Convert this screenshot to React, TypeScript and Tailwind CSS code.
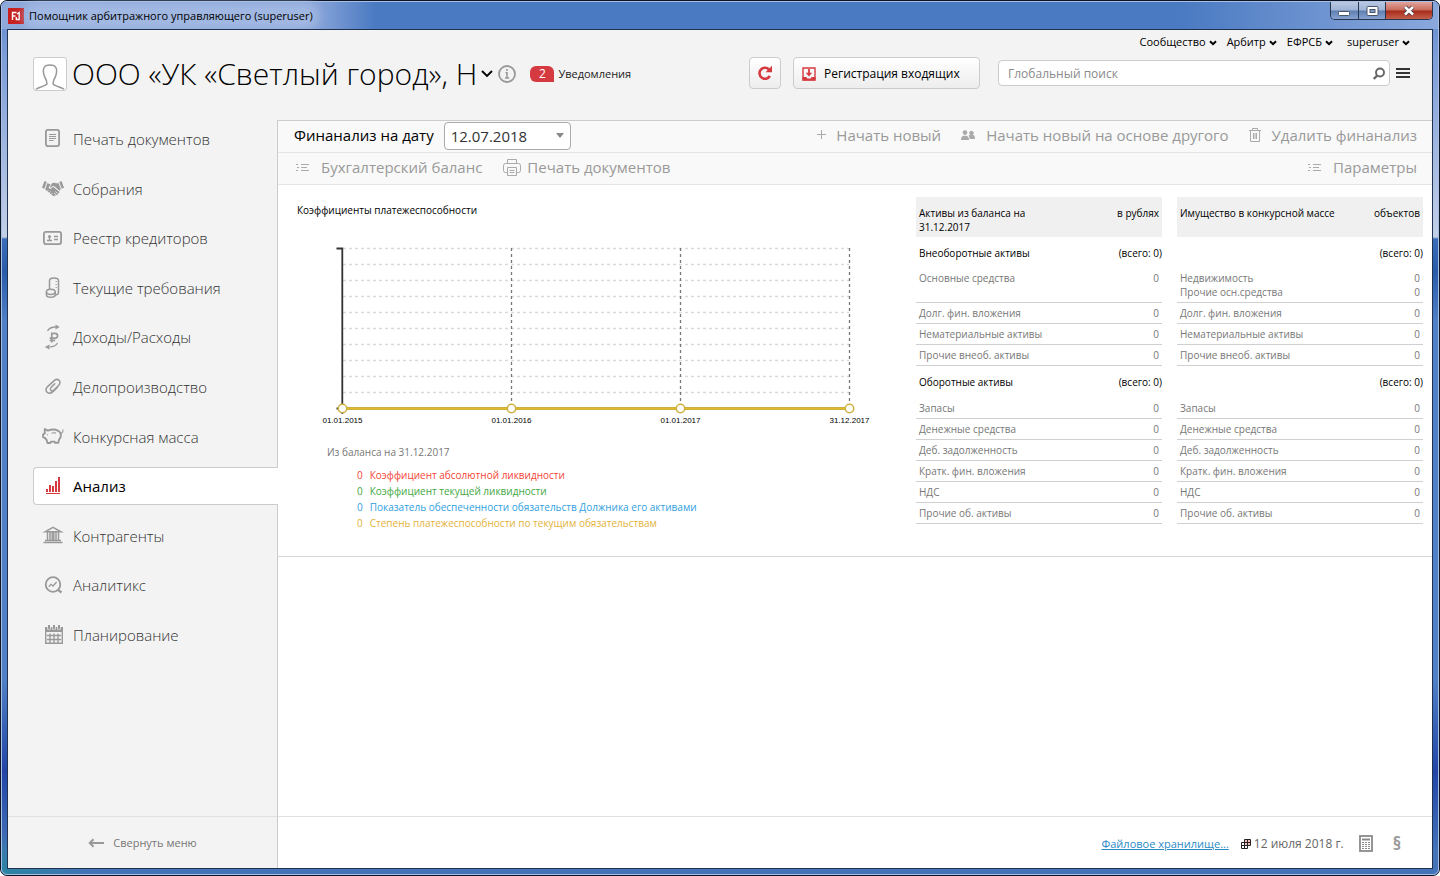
import React from "react";

type IconProps = { className?: string };

const FONT = "font-['Open_Sans','Noto_Sans',sans-serif]";

const DocIcon = () => (
  <svg width="22" height="22" viewBox="0 0 22 22" fill="none" stroke="#999" strokeWidth="1.8">
    <rect x="3.9" y="1.9" width="13.2" height="16.2" rx="2" />
    <path d="M7 6.500h7M7 8.500h7M7 10.500h7M7 12.500h4.500" strokeWidth="1" />
  </svg>
);

const HandshakeIcon = () => (
  <svg width="22" height="22" viewBox="0 0 22 22" fill="#999">
    <path d="M2.500 3L4.700 4 2.300 10.800 0 9.800zM19.500 3L17.300 4l2.400 6.800 2.300-1z" />
    <path d="M5.300 5.200L8.600 6.200 6.800 9.600c.4 1.500 2.400 1.100 3.400-.6l.8-.4 6.200 4.900c.8.9-.2 2-1.200 1.500l.1.400c.3 1-.8 1.600-1.500 1-.1 1-1.100 1.500-1.800 1-.6 1-1.800.7-2.400.2L3.200 11.500z" />
    <path d="M8 9l1.700-3.200c.8-1.300 3-1.200 4.100-.6l2.800.1 2.200 5.800-1.300 1.700-5.700-4.700-1.700.5C9.500 9.900 8.300 10.200 8 9z" />
    <path d="M7 9.500c.8 1.600 2.600 1 3.500-.8l.9-.3 6 4.800M4.500 14l2-2M6.500 15.500l2-2M8.500 17l2-2M12 15l2 1.800M13.300 13.500l2.200 1.800" stroke="#f3f3f3" strokeWidth=".8" fill="none" />
  </svg>
);

const CardIcon = () => (
  <svg width="22" height="22" viewBox="0 0 22 22" fill="none" stroke="#999" strokeWidth="1.800">
    <rect x="1.900" y="4.900" width="17.200" height="12.200" rx="2" />
    <circle cx="7.500" cy="9.400" r="1.500" fill="#999" stroke="none" />
    <path d="M7.500 10v3M5 13.500h5M12 9.500h4M12 12.500h4" strokeWidth="1.300" />
  </svg>
);

const CoinsIcon = () => (
  <svg width="22" height="24" viewBox="0 0 22 24" fill="none" stroke="#999" strokeWidth="1.500">
    <path d="M7.500 13V4.500C7.500 1 16.500 1 16.500 4.500V16c0 2-1.500 3-3.500 3" />
    <ellipse cx="8.800" cy="15.800" rx="4.400" ry="2.600" />
    <path d="M4.400 15.800v3c0 3.400 8.800 3.400 8.800 0v-3" />
    <path d="M13.500 5.500H15M13.500 8.500H15M13.500 11.500H15" strokeWidth=".8" />
  </svg>
);

const RubleIcon = () => (
  <svg width="22" height="26" viewBox="0 0 22 26" fill="none" stroke="#999" strokeWidth="1.300">
    <path d="M5.500 7C7 4 10 2.800 14.500 3" />
    <path d="M13.500.5l4.200 2.500-4.200 2.400z" fill="#999" stroke="none" />
    <path d="M15.500 19c-1.500 3-4 3.800-7.500 3.900" />
    <path d="M7.500 20.500L2.800 22.900l4.700 2.500z" fill="#999" stroke="none" />
    <path d="M9.800 18.500V9.300h3.200c3.400 0 3.400 4.900 0 4.900H7.700M7.700 16.400h5.500" strokeWidth="1.700" />
  </svg>
);

const ClipIcon = () => (
  <svg width="22" height="22" viewBox="0 0 22 22" fill="none" stroke="#999" strokeWidth="1.500" strokeLinecap="round">
    <path d="M15.300 11.500l-4.300 4.100c-4.600 4-9.300-.6-5.400-5L12.200 4.600c3.800-3 7.600.7 4.600 4.600l-5.200 5.100c-2.300 1.700-4.300-.5-2.600-2.700l3.800-3.900" />
  </svg>
);

const PigIcon = () => (
  <svg width="22" height="22" viewBox="0 0 22 22" fill="none" stroke="#999" strokeWidth="1.900" strokeLinejoin="round">
    <path d="M2.800 3l3.200 1.700c3-1.300 7-1.500 10.300.1 3.400 2 3.300 6.200.7 8.800l-.7 3.200h-3.200l-.5-1.200H9l-.6 1.400H5.500l-.8-2.800-1.600-2-2-1V8.300l1.700-.8z" />
    <path d="M9.500 7.300c1.500-.6 3-.6 4.500-.2M5.500 8.300v1M18.500 7.500c2-.3 2.800-2 2.300-4" strokeWidth="1.100" />
  </svg>
);

const BarsIcon = () => (
  <svg width="22" height="22" viewBox="0 0 22 22" fill="#d63a41">
    <path d="M4 14h2v3H4zM7 10h2v7H7zM10 11h2v6h-2zM13 6h2v11h-2zM16 2h2v15h-2zM4 18h14v1H4z" />
  </svg>
);

const BankIcon = () => (
  <svg width="22" height="22" viewBox="0 0 22 22" fill="none" stroke="#999" strokeWidth="1.500">
    <path d="M3 6.800L11 2.300l8 4.500zM5.500 7v9M8 7v9M14 7v9M16.500 7v9M10.200 7v9M11.800 7v9" />
    <path d="M3 15.500h16M1.500 17.500h19" />
  </svg>
);

const AnalyticsIcon = () => (
  <svg width="22" height="22" viewBox="0 0 22 22" fill="none" stroke="#999" strokeWidth="1.800">
    <circle cx="11" cy="10.500" r="7.300" />
    <path d="M15.500 15.500l4 3" strokeWidth="2.200" />
    <path d="M6.800 12.800L9 10.300l2 1.700 3.600-4" strokeWidth="1.300" />
  </svg>
);

const CalendarIcon = () => (
  <svg width="22" height="22" viewBox="0 0 22 22" fill="none" stroke="#999">
    <path d="M3 3h18v5H3z" fill="#999" stroke="none" />
    <path d="M7 2v3.500M12 2v3.500M17 2v3.500" stroke="#f3f3f3" strokeWidth="3.400" />
    <path d="M7 1v4M12 1v4M17 1v4" strokeWidth="2" />
    <path d="M3.700 8v11.300h16.600V8M5 11.500h14M5 15.500h14M8 9.500v9.500M12 9.500v9.500M16 9.500v9.500" strokeWidth="1.400" />
  </svg>
);

const ListIcon = () => (
  <svg width="14" height="10" viewBox="0 0 14 10" stroke="#aaa" strokeWidth="1" fill="none">
    <path d="M5 2.500h8M5 5.500h6M5 8.500h8M0 2.500h2M1 5.500h2M0 8.500h2" />
  </svg>
);

const Chevron = ({ className }: IconProps) => (
  <svg className={className} width="8" height="6" viewBox="0 0 8 6" fill="none" stroke="currentColor" strokeWidth="2">
    <path d="M1 1.200l3 3 3-3" />
  </svg>
);

const menu: { label: string; icon: React.ReactNode; active?: boolean }[] = [
  { label: "Печать документов", icon: <DocIcon /> },
  { label: "Собрания", icon: <HandshakeIcon /> },
  { label: "Реестр кредиторов", icon: <CardIcon /> },
  { label: "Текущие требования", icon: <CoinsIcon /> },
  { label: "Доходы/Расходы", icon: <RubleIcon /> },
  { label: "Делопроизводство", icon: <ClipIcon /> },
  { label: "Конкурсная масса", icon: <PigIcon /> },
  { label: "Анализ", icon: <BarsIcon />, active: true },
  { label: "Контрагенты", icon: <BankIcon /> },
  { label: "Аналитикс", icon: <AnalyticsIcon /> },
  { label: "Планирование", icon: <CalendarIcon /> },
];

function TitleBar() {
  return (
    <div className="flex h-[27px] shrink-0 items-start justify-between">
      <div className="flex h-full items-center gap-[5px] pl-1.5">
        <svg width="16" height="16" viewBox="0 0 16 16">
          <rect width="16" height="16" fill="#c8201f" />
          <path d="M4.500 12V4.500h4M4.500 8h3M9 6l2.200-1.500V11.500H8.300V9" fill="none" stroke="#fff" strokeWidth="1.400" />
        </svg>
        <span className="rounded-full bg-[#a9bfe6]/70 text-[11px] leading-4 text-black shadow-[0_0_8px_6px_rgba(169,191,230,0.7)]">
          Помощник арбитражного управляющего (superuser)
        </span>
      </div>
      <div className="mr-[5px] flex h-[18px] overflow-hidden rounded-b-[5px] border border-t-0 border-[#27364f]">
        <button aria-label="Свернуть" className="flex w-7 items-center justify-center border-r border-[#27364f] bg-[linear-gradient(to_bottom,#b9c8e2_0,#9fb3d6_48%,#5f7fb2_52%,#86a3d0_100%)]">
          <svg width="13" height="16" viewBox="0 0 13 16"><rect x=".5" y="8.500" width="11" height="4" rx="1" fill="#fff" stroke="#4a5568" /></svg>
        </button>
        <button aria-label="Развернуть" className="flex w-[27px] items-center justify-center border-r border-[#27364f] bg-[linear-gradient(to_bottom,#b9c8e2_0,#9fb3d6_48%,#5f7fb2_52%,#86a3d0_100%)]">
          <svg width="13" height="16" viewBox="0 0 13 16">
            <rect x="1" y="3.500" width="11" height="9" rx="1" fill="#fff" stroke="#4a5568" />
            <rect x="4" y="6.500" width="5" height="3" fill="#7f9bc8" stroke="#4a5568" />
          </svg>
        </button>
        <button aria-label="Закрыть" className="flex w-[46px] items-center justify-center bg-[linear-gradient(to_bottom,#e0a59c_0,#c96a5c_48%,#a82a18_52%,#c4604c_100%)]">
          <svg width="14" height="16" viewBox="0 0 14 16">
            <path d="M3 4l8 7.500M11 4L3 11.500" stroke="#4a3a45" strokeWidth="4.400" />
            <path d="M3 4l8 7.500M11 4L3 11.500" stroke="#fff" strokeWidth="2.600" />
          </svg>
        </button>
      </div>
    </div>
  );
}

function TopLink({ children, className = "" }: { children: React.ReactNode; className?: string }) {
  return (
    <button className={`flex items-center gap-[3px] text-[11px] leading-4 text-black ${className}`}>
      {children}
      <Chevron className="mt-0.5" />
    </button>
  );
}

function Header() {
  return (
    <header className="flex h-[90px] shrink-0 items-start pl-[25px] pr-[22px]">
      <div className="mt-[26px] flex min-w-0 flex-1 items-center">
        <div className="flex h-[34px] w-[34px] shrink-0 items-end justify-center rounded-[3px] border border-[#ccc] bg-white">
          <svg width="32" height="32" viewBox="0 0 32 32" fill="none" stroke="#999" strokeWidth="1.500">
            <path d="M2 31.500c1-2 8.500-3 11-5.500 0-3-1-5-2.500-7.500C8 11 9.500 7 16 7s8 4 5.500 11.500C20 21 19 23 19 26c2.500 2.500 10 3.500 11 5.500" />
          </svg>
        </div>
        <h1 className="ml-[5px] whitespace-nowrap text-[30px] font-light leading-9 text-black">
          ООО «УК «Светлый город», Н
        </h1>
        <button aria-label="Выбрать организацию" className="ml-1 text-black">
          <svg width="12" height="8" viewBox="0 0 12 8" fill="none" stroke="currentColor" strokeWidth="1.800">
            <path d="M1 1l5 5 5-5" />
          </svg>
        </button>
        <button aria-label="Информация" className="ml-1">
          <svg width="20" height="20" viewBox="0 0 20 20" fill="none" stroke="#999" strokeWidth="1.800">
            <circle cx="10" cy="10" r="8" />
            <path d="M8.500 8.800H10V14M8 14h4.200M9 6h2" strokeWidth="1.600" />
          </svg>
        </button>
        <a href="#notifications" className="ml-[13px] flex items-center gap-1">
          <span className="flex h-4 w-6 items-center justify-center rounded-l-[6px] rounded-tr-[6px] bg-[#d63a41] text-[12px] leading-4 text-white">2</span>
          <span className="text-[11px] leading-4 text-[#222]">Уведомления</span>
        </a>
      </div>
      <div className="mt-[27px] flex gap-3">
        <button aria-label="Обновить" className="flex h-8 w-8 items-center justify-center rounded-[4px] border border-[#ccc] bg-linear-to-b from-white to-[#ededed]">
          <svg width="16" height="16" viewBox="0 0 16 16" fill="none" stroke="#d63a41" strokeWidth="2.600">
            <path d="M12.800 11A5.500 5.500 0 1 1 12 4.500" />
            <path d="M15 .8v6.400H8.500z" fill="#d63a41" stroke="none" />
          </svg>
        </button>
        <button className="flex h-8 w-[187px] items-center gap-2 whitespace-nowrap rounded-[4px] border border-[#ccc] bg-linear-to-b from-white to-[#ededed] pl-2 pt-0.5 text-[12px] font-medium leading-4 text-black">
          <svg className="shrink-0" width="14" height="14" viewBox="0 0 14 14" fill="none" stroke="#d63a41">
            <path d="M1 1h12v12H1z" strokeWidth="1.400" />
            <path d="M.5 10h3.800l1 1.500h3.400l1-1.500h3.800v3.500H.5z" fill="#d63a41" stroke="none" />
            <path d="M7 2v6" strokeWidth="1.800" />
            <path d="M3.800 5.800h6.400L7 9.600z" fill="#d63a41" stroke="none" />
          </svg>
          Регистрация входящих
        </button>
      </div>
      <div className="ml-[18px] flex w-[412px] flex-col">
        <nav className="mt-1 flex justify-end">
          <TopLink>Сообщество</TopLink>
          <TopLink className="ml-2.5">Арбитр</TopLink>
          <TopLink className="ml-2.5">ЕФРСБ</TopLink>
          <TopLink className="ml-3.5">superuser</TopLink>
        </nav>
        <div className="mt-2.5 flex items-center gap-1.5">
          <label className="flex h-[26px] w-[392px] items-center rounded-[4px] border border-[#ccc] bg-white pl-[9px] pr-1">
            <input
              type="search"
              aria-label="Глобальный поиск"
              placeholder="Глобальный поиск"
              className="min-w-0 flex-1 bg-transparent pt-0.5 text-[12px] leading-4 outline-none placeholder:text-[#8a8a8a]"
            />
            <svg width="12" height="13" viewBox="0 0 12 13" fill="none" stroke="#666" strokeWidth="1.900">
              <circle cx="7" cy="5.500" r="4" />
              <path d="M4.200 8.500L.8 12" strokeWidth="2.400" />
            </svg>
          </label>
          <button aria-label="Меню">
            <svg width="14" height="10" viewBox="0 0 14 10" fill="#333">
              <path d="M0 0h14v2H0zM0 4h14v2H0zM0 8h14v2H0z" />
            </svg>
          </button>
        </div>
      </div>
    </header>
  );
}

function Sidebar() {
  return (
    <aside className="flex w-[269px] shrink-0 flex-col">
      <nav className="flex h-[534px] flex-col justify-between pl-[25px]">
        {menu.map((m) => (
          <a
            key={m.label}
            href="#section"
            aria-current={m.active ? "page" : undefined}
            className={
              m.active
                ? "z-10 -mr-px flex h-[38px] items-center rounded-l-[4px] border border-r-0 border-[#ccc] bg-white pl-[7px] text-[15px] leading-5 text-black"
                : "flex h-[38px] items-center pl-2 text-[15px] font-light leading-5 text-[#333]"
            }
          >
            <span className="flex w-6 shrink-0 justify-center">{m.icon}</span>
            <span className="ml-2">{m.label}</span>
          </a>
        ))}
      </nav>
      <div className="mt-auto flex h-[52px] items-center justify-center border-t border-[#e0e0e0]">
        <button className="flex items-center gap-[9px] text-[11px] leading-4 text-[#777]">
          <svg width="16" height="10" viewBox="0 0 16 10" fill="none" stroke="#999" strokeWidth="2">
            <path d="M1.500 5H16M5.500 1.200L1.700 5l3.800 3.800" />
          </svg>
          Свернуть меню
        </button>
      </div>
    </aside>
  );
}

function Tool({ icon, children, className = "" }: { icon: React.ReactNode; children: React.ReactNode; className?: string }) {
  return (
    <button className={`flex items-center whitespace-nowrap text-[15px] leading-5 text-[#999] ${className}`}>
      {icon}
      {children}
    </button>
  );
}

function Toolbars() {
  return (
    <div className="bg-[#f9f9f9]">
      <div className="flex h-8 items-center justify-between border-b border-[#e5e5e5] pb-1 pl-4 pr-[15px]">
        <div className="flex items-center gap-2.5">
          <label htmlFor="date" className="text-[15px] leading-5 text-black">Финанализ на дату</label>
          <div className="mt-0.5 grid h-7 w-[127px] items-center rounded-[4px] border border-[#aaa] bg-white">
            <select id="date" className="col-start-1 row-start-1 h-full w-full appearance-none bg-transparent pl-1.5 text-[15px] leading-5 text-[#333] outline-none">
              <option>12.07.2018</option>
            </select>
            <svg className="pointer-events-none col-start-1 row-start-1 mr-1.5 justify-self-end" width="8" height="5" viewBox="0 0 8 5" fill="#888">
              <path d="M0 0h8L4 5z" />
            </svg>
          </div>
        </div>
        <div className="flex items-center gap-5">
          <Tool
            className="gap-2.5"
            icon={<svg width="9" height="9" viewBox="0 0 9 9" stroke="#aaa"><path d="M4.500 0v9M0 4.500h9" /></svg>}
          >
            Начать новый
          </Tool>
          <Tool
            className="gap-[11px]"
            icon={
              <svg width="14" height="10" viewBox="0 0 14 10" fill="#aaa">
                <circle cx="4" cy="2.600" r="2.300" />
                <path d="M0 10c0-3 1-3.800 2.800-4.200h2.400C7 6.200 8 7 8 10zM8.600 9c0-1.800-.4-2.800-1-3.600l1.600-.6a2.200 2.200 0 1 1 2.600 0C13.400 5.300 14 6.500 14 9z" />
              </svg>
            }
          >
            Начать новый на основе другого
          </Tool>
          <Tool
            className="gap-[11px]"
            icon={
              <svg width="12" height="14" viewBox="0 0 12 14" fill="none" stroke="#aaa">
                <path d="M0 2.500h12M3.500 2.500v-2h5v2M1.500 2.500v11h9v-11M4.500 5v6M6 5v6M7.500 5v6" />
              </svg>
            }
          >
            Удалить финанализ
          </Tool>
        </div>
      </div>
      <div className="flex h-8 items-center justify-between border-b border-[#e5e5e5] pb-1 pl-[18px] pr-[15px]">
        <div className="flex items-center gap-[21px]">
          <Tool className="gap-[11px]" icon={<ListIcon />}>Бухгалтерский баланс</Tool>
          <Tool
            className="gap-1.5"
            icon={
              <svg className="mt-0.5" width="18" height="17" viewBox="0 0 18 17" fill="none" stroke="#aaa">
                <path d="M4.500 4.500v-4h9v4M4.500 13.500h-2a2 2 0 0 1-2-2v-5a2 2 0 0 1 2-2h13a2 2 0 0 1 2 2v5a2 2 0 0 1-2 2h-2M4.500 8.500h9v8h-9zM6.500 11.500h5M6.500 13.500h5" />
              </svg>
            }
          >
            Печать документов
          </Tool>
        </div>
        <Tool className="gap-[11px]" icon={<ListIcon />}>Параметры</Tool>
      </div>
    </div>
  );
}

const ticks = ["01.01.2015", "01.01.2016", "01.01.2017", "31.12.2017"];

function Chart() {
  return (
    <svg className="ml-[23px] mt-[25px]" width="575" height="186" viewBox="0 0 575 186" role="img" aria-label="Коэффициенты платежеспособности">
      {Array.from({ length: 10 }, (_, i) => (
        <path key={i} d={`M42 ${6.5 + i * 16}H548`} stroke="#dadada" strokeWidth="1.300" strokeDasharray="3 3" />
      ))}
      {[210, 379, 548].map((x) => (
        <path key={x} d={`M${x + 0.5} 6V172`} stroke="#777" strokeWidth="1.300" strokeDasharray="3 3" />
      ))}
      <path d="M35.500 6.500H41.300V172M35.500 166.500h5" stroke="#333" strokeWidth="1.800" fill="none" />
      <path d="M41 166.500H548" stroke="#b5a855" strokeWidth="3.200" />
      <path d="M41 166.500H548" stroke="#e3b829" strokeWidth="1.800" />
      {ticks.map((t, i) => (
        <g key={t}>
          <circle cx={41.5 + i * 169} cy="166.500" r="4.200" fill="#fff" stroke="#cdb040" strokeWidth="1.500" />
          <text x={41.5 + i * 169} y="181" textAnchor="middle" fontSize="8" fill="#000" className="font-['Liberation_Sans',sans-serif]">
            {t}
          </text>
        </g>
      ))}
    </svg>
  );
}

const legend = [
  { text: "Коэффициент абсолютной ликвидности", color: "text-[#f44336]" },
  { text: "Коэффициент текущей ликвидности", color: "text-[#43a843]" },
  { text: "Показатель обеспеченности обязательств Должника его активами", color: "text-[#2f9fe0]" },
  { text: "Степень платежеспособности по текущим обязательствам", color: "text-[#e3b23a]" },
];

type Row = string[];

const currentAssets: Row[] = [["Запасы"], ["Денежные средства"], ["Деб. задолженность"], ["Кратк. фин. вложения"], ["НДС"], ["Прочие об. активы"]];
const fixedTail: Row[] = [["Долг. фин. вложения"], ["Нематериальные активы"], ["Прочие внеоб. активы"]];

function AssetTable({ title, unit, sections, first }: { title: string; unit: string; sections: [string, string]; first: Row }) {
  const section = (name: string) => (
    <tr className="h-8 text-black">
      <th scope="rowgroup" className="pl-[3px] text-left font-normal">{name}</th>
      <td className="text-right">(всего: 0)</td>
    </tr>
  );
  const line = (row: Row, tall = false) => (
    <tr key={row[0]} className={tall ? "h-[34px] align-top" : "h-[21px]"}>
      <td className={tall ? "border-b border-[#d0d0d0] pl-[3px] pt-0.5" : "border-b border-[#d0d0d0] pl-[3px]"}>{row.map((r) => <div key={r}>{r}</div>)}</td>
      <td className={tall ? "border-b border-[#d0d0d0] pr-[3px] pt-0.5 text-right" : "border-b border-[#d0d0d0] pr-[3px] text-right"}>{row.map((r) => <div key={r}>0</div>)}</td>
    </tr>
  );
  return (
    <table className="w-[246px] table-fixed border-separate border-spacing-0 self-start text-[10px] leading-[14px] text-[#777]">
      <colgroup>
        <col />
        <col className="w-[72px]" />
      </colgroup>
      <thead>
        <tr className="h-10 bg-[#f0f0f0] align-top text-black">
          <th scope="col" className="pl-[3px] pt-[9px] text-left font-normal"><div className={first.length > 1 ? "whitespace-nowrap" : "w-[130px]"}>{title}</div></th>
          <th scope="col" className="pr-[3px] pt-[9px] text-right font-normal">{unit}</th>
        </tr>
      </thead>
      <tbody>
        {section(sections[0])}
        {line(first, true)}
        {fixedTail.map((r) => line(r))}
      </tbody>
      <tbody>
        {section(sections[1])}
        {currentAssets.map((r) => line(r))}
      </tbody>
    </table>
  );
}

export default function App() {
  return (
    <div className={`flex min-h-screen flex-col rounded-[7px] border border-[#0d1424] bg-[radial-gradient(ellipse_90px_40px_at_bottom_left,#2a86a0_0,#4473b800_100%),linear-gradient(to_bottom,#5f87cc_0,#7f9fd8_60px,#c3cfe8_236px,#3b6cb8_238px,#2a5cab_270px,#4f7fc4_320px,#4f7fc4_680px,#2345a8_770px,#4473b8_850px)] ${FONT}`}>
      <div className="flex flex-1 flex-col rounded-[6px] border border-[#a9c0e6]">
        <div className="rounded-t-[6px] bg-[linear-gradient(to_right,#8fa9da_0,#86a3d8_22%,#4a7ac2_26%,#4a7ac2_82%,#8aa8dc_100%)]">
          <TitleBar />
        </div>
        <div className="mx-[5px] mb-[5px] flex flex-1 flex-col border border-[#1f3350] bg-[#f3f3f3]">
          <Header />
          <div className="flex flex-1">
            <Sidebar />
            <main className="flex min-w-0 flex-1 flex-col border-l border-t border-[#ccc] bg-white">
              <Toolbars />
              <section className="flex border-b border-[#d6d6d6] pb-[25px] pr-[9px] pt-3">
                <div className="flex min-w-0 flex-1 flex-col">
                  <h2 className="ml-[19px] mt-1.5 text-[10px] font-normal leading-[14px] text-black">Коэффициенты платежеспособности</h2>
                  <Chart />
                  <p className="ml-[49px] mt-[17px] text-[10px] leading-[14px] text-[#777]">Из баланса на 31.12.2017</p>
                  <ul className="ml-[79px] mt-2 text-[10px] leading-4">
                    {legend.map((l) => (
                      <li key={l.text} className={`flex gap-[7px] ${l.color}`}>
                        <span>0</span>
                        <span>{l.text}</span>
                      </li>
                    ))}
                  </ul>
                </div>
                <div className="flex shrink-0 gap-[15px]">
                  <AssetTable title="Активы из баланса на 31.12.2017" unit="в рублях" sections={["Внеоборотные активы", "Оборотные активы"]} first={["Основные средства"]} />
                  <AssetTable title="Имущество в конкурсной массе" unit="объектов" sections={["", ""]} first={["Недвижимость", "Прочие осн.средства"]} />
                </div>
              </section>
              <footer className="mt-auto flex h-[52px] items-center justify-end border-t border-[#e0e0e0] pr-[31px] pt-0.5 text-[12px] leading-4">
                <a href="#storage" className="text-[11px] text-[#2b8ac6] underline">Файловое хранилище...</a>
                <svg className="ml-3" width="10" height="10" viewBox="0 0 10 10" fill="none" stroke="#222">
                  <path d="M3.500.5h6v6h-6z" fill="#f3c0bd" stroke="none" />
                  <path d="M3.500.500h6v6h-6zM6.500.5v9M.5 3.500h9M.5 3.500v6h6M3.500 3.500v6M.5 6.500h6" />
                </svg>
                <span className="ml-[3px] text-[#666]">12 июля 2018 г.</span>
                <button aria-label="Калькулятор" className="ml-[15px]">
                  <svg width="14" height="17" viewBox="0 0 14 17" fill="none" stroke="#8a8a8a">
                    <rect x="1" y="1" width="12" height="15" strokeWidth="1.800" />
                    <path d="M3 4.500h8" strokeWidth="2" />
                    <path d="M3 7.500h8M3 9.500h8M3 11.500h8M3 13.500h8" strokeDasharray="2 1" />
                  </svg>
                </button>
                <button aria-label="Правовая база" className="ml-5 text-[17px] font-bold leading-5 text-[#999]">§</button>
              </footer>
            </main>
          </div>
        </div>
      </div>
    </div>
  );
}
